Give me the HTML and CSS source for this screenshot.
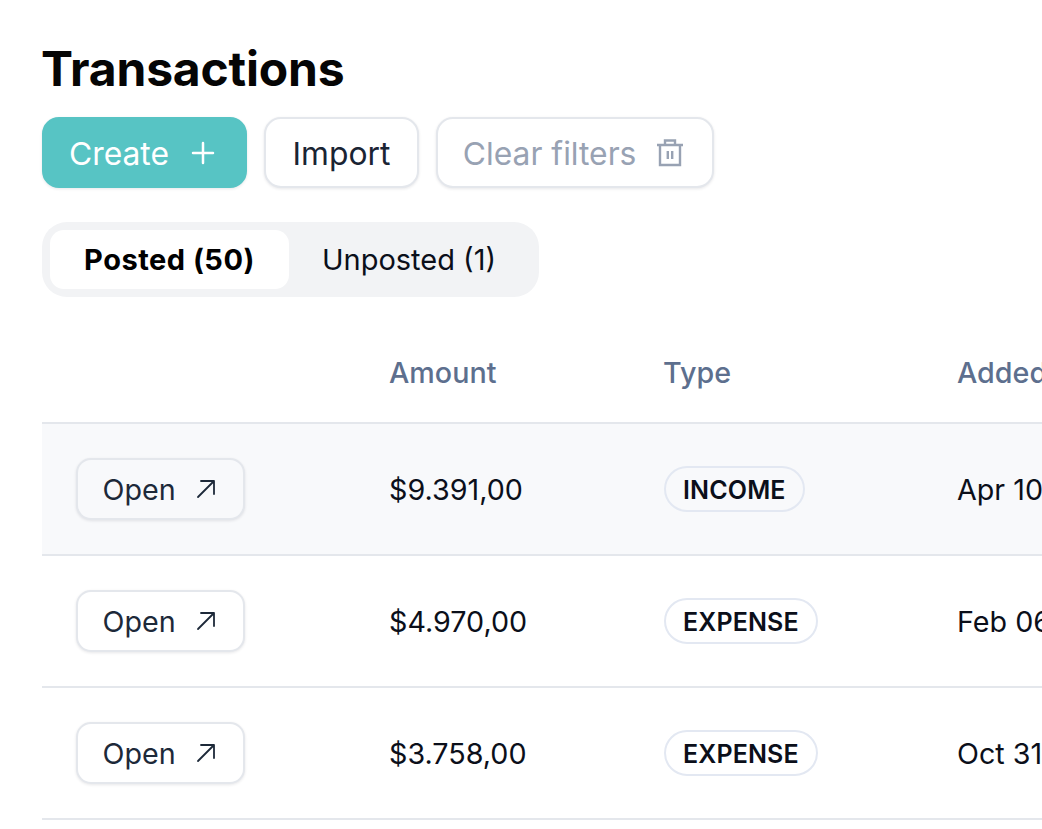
FILE: index.html
```html
<!DOCTYPE html>
<html lang="en">
<head>
<meta charset="utf-8">
<title>Transactions</title>
<link rel="stylesheet" href="styles.css">
</head>
<body>
<main class="page">
  <h1 class="title">Transactions</h1>
  <div class="actions">
    <button class="btn btn-primary">Create
      <svg class="icon-btn" viewBox="0 0 32 32" fill="none" stroke="currentColor" stroke-width="2.500" stroke-linecap="round"><path d="M16 6v20M6 16h20"/></svg>
    </button>
    <button class="btn btn-plain">Import</button>
    <button class="btn btn-muted">Clear filters
      <svg class="icon-btn" viewBox="0 0 32 32" fill="none" stroke="currentColor" stroke-width="2.400"><path d="M3 8h26M6 8v20h20V8M11 8V3.500h10V8M13.800 14v8M18.200 14v8"/></svg>
    </button>
  </div>
  <div class="tabs">
    <div class="tab tab-active">Posted (50)</div>
    <div class="tab">Unposted (1)</div>
  </div>
  <table class="table">
    <colgroup><col class="col-open"><col class="col-amount"><col class="col-type"><col class="col-date"></colgroup>
    <thead>
      <tr><th></th><th>Amount</th><th>Type</th><th>Added</th></tr>
    </thead>
    <tbody>
      <tr class="row-hover">
        <td><button class="open">Open <svg class="icon-arrow" viewBox="0 0 20 20" fill="none" stroke="currentColor" stroke-width="1.800" stroke-linecap="round" stroke-linejoin="round"><path d="M2 18 18 2M5 2h13v13"/></svg></button></td>
        <td>$9.391,00</td>
        <td><span class="badge">INCOME</span></td>
        <td>Apr 10</td>
      </tr>
      <tr>
        <td><button class="open">Open <svg class="icon-arrow" viewBox="0 0 20 20" fill="none" stroke="currentColor" stroke-width="1.800" stroke-linecap="round" stroke-linejoin="round"><path d="M2 18 18 2M5 2h13v13"/></svg></button></td>
        <td>$4.970,00</td>
        <td><span class="badge">EXPENSE</span></td>
        <td>Feb 06</td>
      </tr>
      <tr>
        <td><button class="open">Open <svg class="icon-arrow" viewBox="0 0 20 20" fill="none" stroke="currentColor" stroke-width="1.800" stroke-linecap="round" stroke-linejoin="round"><path d="M2 18 18 2M5 2h13v13"/></svg></button></td>
        <td>$3.758,00</td>
        <td><span class="badge">EXPENSE</span></td>
        <td>Oct 31</td>
      </tr>
    </tbody>
  </table>
</main>
</body>
</html>
```
FILE: styles.css
```css
* { box-sizing: border-box; }
html, body { margin: 0; height: 100%; overflow: hidden; background: #fff; }
body { font-family: Inter, "Liberation Sans", sans-serif; color: #0b0f1a; }
.page { padding: 41px 0 0 42px; width: 1400px; }
.title { margin: 0 0 0 -1px; font-size: 48px; line-height: 56px; font-weight: 700; color: #050505; letter-spacing: -0.2px; }
.actions { display: flex; gap: 17px; margin-top: 20px; }
.btn {
  height: 71px; padding: 1px 26px 0 25px; display: flex; align-items: center; gap: 18px;
  font: 400 31.800px Inter, sans-serif; color: #1a2433; background: #fff;
  border: 2px solid #e4e7ec; border-radius: 17px; box-shadow: 0 1px 3px rgba(16,24,40,.1);
}
.btn-primary { background: #57c4c4; border-color: #57c4c4; color: #fff; }
.btn-plain { padding: 1px 26.500px 0; }
.btn-muted { color: #98a2b3; }
.icon-btn { width: 32px; height: 32px; }
.tabs { display: inline-flex; margin-top: 34px; padding: 8px; background: #f2f3f5; border-radius: 25px; height: 75px; width: 497px; }
.tab { display: flex; align-items: center; justify-content: center; font-size: 29px; line-height: 59px; width: 239px; color: #0b0f1a; }
.tab + .tab { width: 240px; }
.tab-active { background: #fff; border-radius: 14px; font-weight: 700; color: #000; letter-spacing: 0.5px; }
.table { border-collapse: collapse; table-layout: fixed; width: 1260px; margin-top: 22px; font-size: 28.700px; }
.col-open { width: 314px; }
.col-amount { width: 274px; }
.col-type { width: 294px; }
.table th { height: 104px; padding: 3px 33px 0; text-align: left; font-weight: 500; color: #5d6f8e; border-bottom: 2px solid #e4e7ec; }
.table td { height: 132px; padding: 0 33px; border-bottom: 2px solid #e4e7ec; white-space: nowrap; }
.row-hover td { background: #f8f9fb; }
.open {
  width: 169px; height: 62px; margin-left: 1px; padding: 0 0 0 24.500px; display: flex; align-items: center; gap: 20.500px;
  font: 400 28.700px Inter, sans-serif; color: #1d2939; background: #fff;
  border: 2px solid #e4e7ec; border-radius: 15px; box-shadow: 0 1px 3px rgba(16,24,40,.1);
}
.row-hover .open { background: #f8f9fb; }
.icon-arrow { width: 20px; height: 20px; }
.badge {
  display: inline-block; margin-left: 1px; padding: 0 17px; height: 46px; line-height: 45px;
  border: 2px solid #e3e8f2; border-radius: 23px; font-size: 25px; font-weight: 600; letter-spacing: 0.15px; color: #0b0f1a;
  vertical-align: middle;
}
```
